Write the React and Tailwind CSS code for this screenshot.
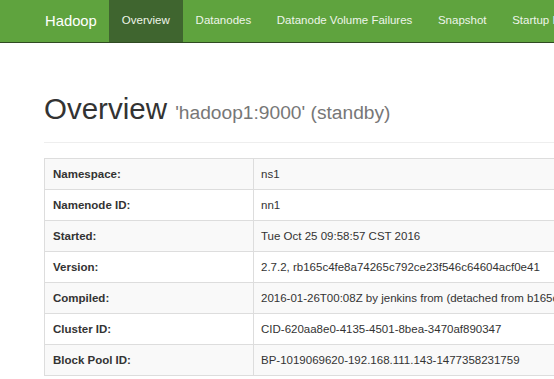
const navItems = ['Overview', 'Datanodes', 'Datanode Volume Failures', 'Snapshot', 'Startup Progress', 'Utilities'];

const rows = [
  ['Namespace:', 'ns1'],
  ['Namenode ID:', 'nn1'],
  ['Started:', 'Tue Oct 25 09:58:57 CST 2016'],
  ['Version:', '2.7.2, rb165c4fe8a74265c792ce23f546c64604acf0e41'],
  ['Compiled:', '2016-01-26T00:08Z by jenkins from (detached from b165c4f)'],
  ['Cluster ID:', 'CID-620aa8e0-4135-4501-8bea-3470af890347'],
  ['Block Pool ID:', 'BP-1019069620-192.168.111.143-1477358231759'],
];

export default function App() {
  return (
    <div className="min-h-screen w-full overflow-hidden bg-white text-[#333] font-['Liberation_Sans',Arial,sans-serif]">
      <nav className="flex h-[43px] items-stretch whitespace-nowrap border-b border-[#2f4a22] bg-[#5fa33e]">
        <div className="flex items-center pl-[45px] pr-[12px] text-[14.8px] text-white">Hadoop</div>
        {navItems.map((item, i) => (
          <div
            key={item}
            className={
              i === 0
                ? 'flex shrink-0 items-center bg-[#3f652f] px-[13px] text-[11.5px] text-[#eef5ea]'
                : 'flex shrink-0 items-center px-[12.8px] text-[11.5px] text-[#eef5ea]'
            }
          >
            {item}
          </div>
        ))}
      </nav>

      <div className="w-[760px] pl-[44px]">
        <div className="mt-[50px] border-b border-[#eee] pb-[5px]">
          <h1 className="mb-[8px] text-[29.5px] leading-[32px] font-normal text-[#333]">
            Overview <small className="text-[19.2px] text-[#777]">'hadoop1:9000' (standby)</small>
          </h1>
        </div>

        <table className="mt-[15px] w-[700px] border-collapse border border-[#ddd] text-[11.5px] leading-[16.4px]">
          <tbody>
            {rows.map(([label, value], i) => (
              <tr key={label} className={i % 2 === 0 ? 'bg-[#f9f9f9]' : 'bg-white'}>
                <th className="w-[209px] border border-[#ddd] px-[8px] py-[6.8px] text-left font-bold">{label}</th>
                <td className="whitespace-nowrap border border-[#ddd] px-[7px] py-[6.8px]">{value}</td>
              </tr>
            ))}
          </tbody>
        </table>
      </div>
    </div>
  );
}
